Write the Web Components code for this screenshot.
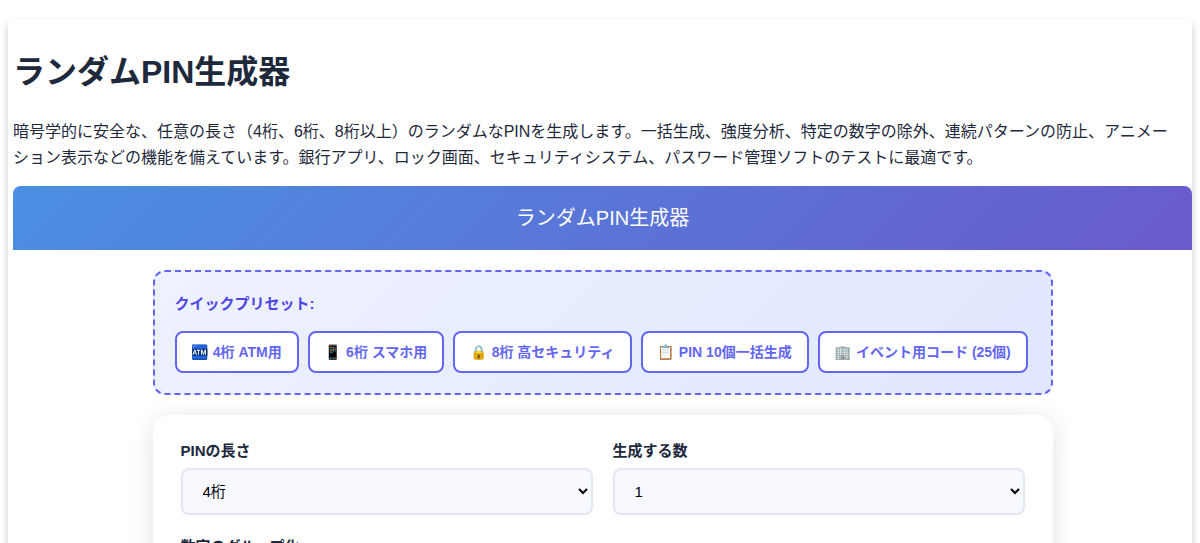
<!DOCTYPE html>
<html lang="ja">
<head>
<meta charset="utf-8">
<meta name="viewport" content="width=device-width, initial-scale=1">
<title>ランダムPIN生成器</title>
<style>
body {
  margin: 0;
  font-family: "Liberation Sans", "Noto Sans CJK JP", "Noto Color Emoji", sans-serif;
  font-size: 16px;
  line-height: 26px;
  color: #1e293b;
}
</style>
</head>
<body>
<pin-page>
  <h1 slot="title">ランダムPIN生成器</h1>
  <p slot="intro">暗号学的に安全な、任意の長さ（4桁、6桁、8桁以上）のランダムなPINを生成します。一括生成、強度分析、特定の数字の除外、連続パターンの防止、アニメーション表示などの機能を備えています。銀行アプリ、ロック画面、セキュリティシステム、パスワード管理ソフトのテストに最適です。</p>
  <pin-banner>ランダムPIN生成器</pin-banner>
  <pin-presets>
    <span slot="label">クイックプリセット:</span>
    <preset-button>🏧 4桁 ATM用</preset-button>
    <preset-button>📱 6桁 スマホ用</preset-button>
    <preset-button>🔒 8桁 高セキュリティ</preset-button>
    <preset-button>📋 PIN 10個一括生成</preset-button>
    <preset-button>🏢 イベント用コード (25個)</preset-button>
  </pin-presets>
  <pin-form>
    <select-field label="PINの長さ" options="4桁|6桁|8桁"></select-field>
    <select-field label="生成する数" options="1|5|10|25"></select-field>
    <select-field label="数字のグループ化" options="なし|2桁ごと|4桁ごと"></select-field>
  </pin-form>
</pin-page>
<script>
function define(name, html) {
  const template = document.createElement('template');
  template.innerHTML = html;
  customElements.define(name, class extends HTMLElement {
    constructor() {
      super();
      this.attachShadow({ mode: 'open' }).append(template.content.cloneNode(true));
    }
  });
}

define('pin-page', `
<style>
:host { display: block; padding: 20px 8px; }
article { padding: 27px 0 0 5px; background: #fff; box-shadow: 0 4px 8px rgba(0,0,0,.2); }
::slotted(h1) { margin: 0 0 21px; font-size: 32px; line-height: 51px; }
::slotted(p) { margin: 0 0 15px; padding-right: 12px; }
</style>
<article>
  <header><slot name="title"></slot><slot name="intro"></slot></header>
  <main><slot></slot></main>
</article>`);

define('pin-banner', `
<style>
:host { display: block; padding: 16px; font-size: 20px; line-height: 32px; text-align: center; color: #fff;
  background: linear-gradient(135deg, #4a90e2, #6a5acd); border-radius: 8px 8px 0 0; }
</style>
<slot></slot>`);

define('pin-presets', `
<style>
:host { display: block; box-sizing: border-box; max-width: 900px; margin: 20px auto; padding: 20px;
  border: 2px dashed #6366f1; border-radius: 12px; background: linear-gradient(135deg, #eef2ff, #e0e7ff); }
.label { margin-bottom: 15px; font-size: 15px; line-height: 24px; font-weight: 700; color: #4f46e5; }
.row { display: flex; flex-wrap: wrap; gap: 9px; }
</style>
<div class="label"><slot name="label"></slot></div>
<div class="row"><slot></slot></div>`);

define('preset-button', `
<style>
:host { display: block; }
button { display: block; margin: 0; padding: 10px 15px; border: 2px solid #6366f1; border-radius: 8px;
  background: #fff; color: #6366f1; font-family: inherit; font-size: 14px; line-height: 18px; font-weight: 600; cursor: pointer; }
</style>
<button type="button"><slot></slot></button>`);

define('pin-form', `
<style>
:host { display: block; box-sizing: border-box; max-width: 900px; margin: 0 auto; padding: 24px 28px;
  border-radius: 16px; background: #fff; box-shadow: 0 4px 24px rgba(0,0,0,.12); }
form { display: grid; grid-template-columns: repeat(2, 1fr); gap: 20px; }
</style>
<form><slot></slot></form>`);

customElements.define('select-field', class extends HTMLElement {
  connectedCallback() {
    if (this.shadowRoot) return;
    const root = this.attachShadow({ mode: 'open' });
    root.innerHTML = `
<style>
:host { display: block; }
label { display: block; margin-bottom: 6px; font-size: 15px; line-height: 23px; font-weight: 600; }
select { display: block; box-sizing: border-box; width: 100%; height: 47px; padding: 0 16px; border: 2px solid #e2e8f0;
  border-radius: 8px; background: #f8f9ff; color: #000; font-family: inherit; font-size: 15px; }
</style>
<label for="choice"></label>
<select id="choice"></select>`;
    root.querySelector('label').textContent = this.getAttribute('label');
    const select = root.querySelector('select');
    for (const text of this.getAttribute('options').split('|')) select.add(new Option(text));
  }
});
</script>
</body>
</html>
